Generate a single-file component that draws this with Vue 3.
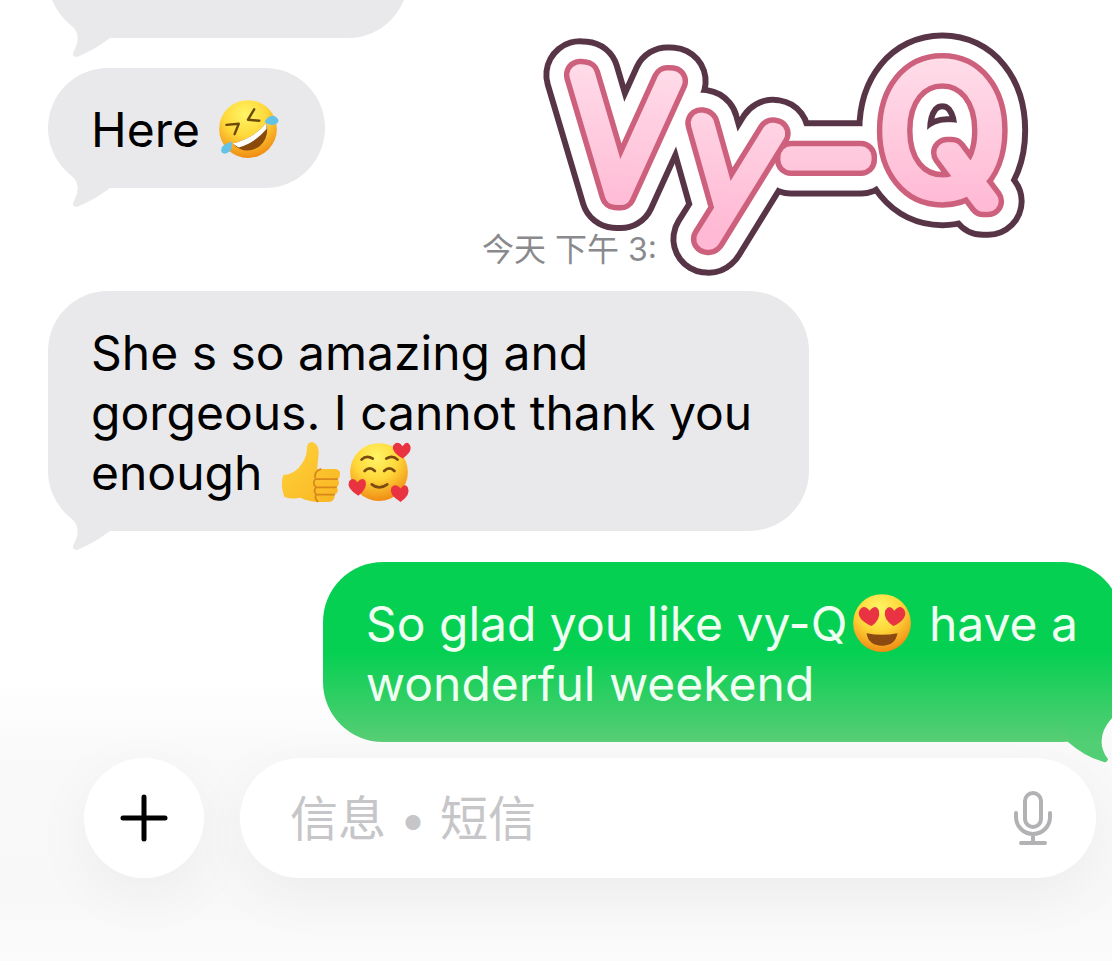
<script setup>
import { ref } from 'vue';
// data
const message = ref('');

// the sticker is painted letter by letter, one pass per outline
const letters = [
  { char: 'V', x: 39, y: 171, size: 164, turn: 4, face: 'narrow' },
  { char: 'y', x: 155, y: 185, size: 170, turn: 8, face: 'light' },
  { char: '–', x: 261, y: 182, size: 140, turn: 0, face: 'dash' },
  { char: 'Q', x: 351, y: 170, size: 164, turn: 0, face: 'round' },
];
const layers = ['edge', 'paper', 'rim', 'candy'];
</script>

<template>
  <div class="chat">
    <main class="thread">
      <div class="bubble received previous">
        <svg class="tail" viewBox="0 0 60 50" aria-hidden="true">
          <path d="M14 8 L26 20 Q33 28 27 41 Q22 48 29 49 Q46 42 62 30 V10Z" />
        </svg>
      </div>

      <div class="bubble received">
        <svg class="tail" viewBox="0 0 60 50" aria-hidden="true">
          <path d="M14 8 L26 20 Q33 28 27 41 Q22 48 29 49 Q46 42 62 30 V10Z" />
        </svg>
        Here
        <svg class="emoji" viewBox="0 0 64 64" role="img" aria-label="rofl">
          <defs>
            <radialGradient id="face" cx="45%" cy="25%" r="75%">
              <stop offset="0" stop-color="#fff566" />
              <stop offset="0.5" stop-color="#ffd83a" />
              <stop offset="1" stop-color="#f08c14" />
            </radialGradient>
          </defs>
          <circle cx="32" cy="32" r="28" fill="url(#face)" />
          <g fill="none" stroke="#6b4a08" stroke-width="2.4" stroke-linejoin="round" stroke-linecap="round">
            <path d="M11 28 L23 27 L19 37" />
            <path d="M38 13 L32 23 L43 24" />
          </g>
          <path d="M17 46 Q38 41 50 26 Q53 40 43 49 Q29 58 17 46Z" fill="#8a4a0c" />
          <path d="M17 46 Q38 41 50 26 L50 32 Q38 46 23 50Z" fill="#fff" />
          <path d="M48 25 Q53 17 59 20 Q65 25 57 28 Q52 29 48 25Z" fill="#63c3e6" />
          <path d="M16 44 Q18 54 10 56 Q4 56 7 49 Q10 46 16 44Z" fill="#63c3e6" />
        </svg>
      </div>

      <time class="stamp">今天 下午 3:</time>

      <div class="bubble received long">
        <svg class="tail" viewBox="0 0 60 50" aria-hidden="true">
          <path d="M14 8 L26 20 Q33 28 27 41 Q22 48 29 49 Q46 42 62 30 V10Z" />
        </svg>
        She s so amazing and<br />
        gorgeous. I cannot thank you<br />
        enough
        <svg class="emoji" viewBox="0 0 64 64" role="img" aria-label="thumbs up">
          <defs>
            <linearGradient id="hand" x1="0" y1="0" x2="1" y2="1">
              <stop offset="0" stop-color="#ffd33c" />
              <stop offset="1" stop-color="#f9b522" />
            </linearGradient>
          </defs>
          <path
            d="M5 35 Q14 34 20 28 Q28 19 28 10 Q28 3 33 3 Q41 5 39 18 L38 29 H56 Q61 30 60 35 Q60 38 58 39 Q61 43 57 47 Q60 51 55 54 Q55 61 49 61 H37 Q27 60 22 57 Q13 59 6 56 Q2 45 5 35Z"
            fill="url(#hand)"
          />
          <path d="M36 38 Q35 31 42 29 M36 39 H58 M37 47 H57 M37 54 H55 M36 39 Q33 43 37 47 Q34 50 37 54 Q35 58 39 61" fill="none" stroke="#d9871a" stroke-width="1.7" />
        </svg>
        <svg class="emoji" viewBox="0 0 64 64" role="img" aria-label="smiling with hearts">
          <circle cx="32" cy="32" r="28" fill="url(#face)" />
          <g fill="none" stroke="#7a4a10" stroke-width="2.6" stroke-linecap="round">
            <path d="M15 20 Q20 15 26 19 M39 19 Q45 15 50 20" />
            <path d="M18 31 Q23 26 28 31 M37 31 Q42 26 47 31" />
            <path d="M25 44 Q32 50 40 44" />
          </g>
          <g fill="#ea3340">
            <path d="M55 19 Q43 12 46 6 Q50 1 55 7 Q59 1 62 6 Q65 12 55 19Z" />
            <path d="M12 55 Q0 48 3 41 Q7 36 11 42 Q16 36 19 41 Q21 48 12 55Z" />
            <path d="M53 61 Q41 54 44 47 Q48 42 53 48 Q57 42 60 47 Q63 54 53 61Z" />
          </g>
        </svg>
      </div>

      <div class="bubble sent">
        <svg class="tail" viewBox="0 0 60 50" aria-hidden="true">
          <defs>
            <linearGradient id="leaf" gradientUnits="userSpaceOnUse" x1="0" y1="0" x2="0" y2="30">
              <stop offset="0" stop-color="#3ccf69" />
              <stop offset="1" stop-color="#52ce74" />
            </linearGradient>
          </defs>
          <path d="M54 2 Q35 20 41 38 Q43 44 46 47 Q45 52 39 49 Q22 44 6 30 V10Z" fill="url(#leaf)" />
        </svg>
        So glad you like vy-Q<svg class="emoji" viewBox="0 0 64 64" role="img" aria-label="heart eyes">
          <circle cx="32" cy="32" r="28" fill="url(#face)" />
          <path d="M22 35 Q7 28 10 20 Q14 13 20 20 Q26 13 29 20 Q31 28 22 35Z" fill="#e93342" />
          <path d="M43 35 Q33 28 35 20 Q39 13 44 20 Q50 13 54 20 Q57 28 43 35Z" fill="#e93342" />
          <path d="M17 42 Q32 45 47 42 Q45 54 32 54 Q19 54 17 42Z" fill="#8a4a12" />
        </svg>
        have a<br />
        wonderful weekend
      </div>
    </main>

    <form class="composer" @submit.prevent>
      <button class="add" type="button" aria-label="+">
        <svg viewBox="0 0 48 48" aria-hidden="true">
          <path d="M24 3 V45 M3 24 H45" />
        </svg>
      </button>
      <div class="field">
        <input v-model="message" type="text" placeholder="信息 • 短信" aria-label="信息 • 短信" />
        <button class="mic" type="button" aria-label="mic">
          <svg viewBox="0 0 40 60" aria-hidden="true">
            <rect x="12" y="5" width="16" height="34" rx="8" />
            <path d="M3 25 V29 A17 17 0 0 0 37 29 V25 M20 46 V55 M8 55 H32" />
          </svg>
        </button>
      </div>
    </form>

    <svg class="sticker" viewBox="0 0 520 280" role="img" aria-label="Vy-Q">
      <defs>
        <linearGradient id="candy" gradientUnits="userSpaceOnUse" x1="0" y1="-135" x2="0" y2="20">
          <stop offset="0" stop-color="#ffdde9" />
          <stop offset="1" stop-color="#ffb9d4" />
        </linearGradient>
      </defs>
      <g v-for="layer in layers" :key="layer" :class="layer" aria-hidden="true">
        <text
          v-for="letter in letters"
          :key="letter.char"
          :class="letter.face"
          :font-size="letter.size"
          :transform="`translate(${letter.x} ${letter.y}) rotate(${letter.turn})`"
        >{{ letter.char }}</text>
      </g>
    </svg>
  </div>
</template>

<style>
body {
  margin: 0;
  background: #fff;
}
</style>

<style scoped>
* {
  box-sizing: border-box;
}
.chat {
  position: relative;
  display: flex;
  flex-direction: column;
  min-height: 100vh;
  overflow: hidden;
  background: linear-gradient(#fff 680px, #f9f9f9 760px, #f8f8f8 900px, #fbfbfb);
  font-family: Inter, 'Noto Sans CJK SC', sans-serif;
}
.thread {
  display: flex;
  flex-direction: column;
  align-items: flex-start;
  padding: 0 0 0 48px;
}
.bubble {
  position: relative;
  padding: 32px 44px 28px 43px;
  border-radius: 60px;
  font-size: 48px;
  line-height: 60px;
}
.received {
  background: #e9e9eb;
  color: #000;
}
.previous {
  width: 360px;
  height: 120px;
  margin-top: -82px;
  margin-bottom: 30px;
}
.long {
  padding-right: 57px;
}
.sent {
  align-self: flex-end;
  margin-top: 31px;
  margin-right: -10px;
  background: linear-gradient(#05d052 50%, #58cd75);
  color: #effff2;
}
.tail {
  position: absolute;
  bottom: -20px;
  left: 0;
  width: 60px;
  height: 50px;
  overflow: visible;
  fill: #e9e9eb;
}
.sent .tail {
  right: 0;
  left: auto;
}
.emoji {
  width: 66px;
  height: 66px;
  margin: -8px 0 -8px 2px;
  vertical-align: -7px;
}
.stamp {
  align-self: flex-start;
  margin: 38px 0 17px 434px;
  color: #8a8a8e;
  font-size: 32px;
  line-height: 48px;
}
.composer {
  display: flex;
  gap: 36px;
  padding: 16px 16px 83px 84px;
}
.add {
  display: flex;
  flex: none;
  align-items: center;
  justify-content: center;
  width: 120px;
  height: 120px;
  padding: 0;
  border: 0;
  border-radius: 60px;
  background: #fff;
  box-shadow: 0 16px 60px rgba(0, 0, 0, 0.05);
}
.add svg {
  width: 48px;
  height: 48px;
  fill: none;
  stroke: #000;
  stroke-width: 5;
  stroke-linecap: round;
}
.field {
  display: flex;
  flex: 1;
  align-items: center;
  min-width: 0;
  height: 120px;
  padding: 0 43px 0 50px;
  border-radius: 60px;
  background: #fff;
  box-shadow: 0 16px 60px rgba(0, 0, 0, 0.05);
}
.field input {
  flex: 1;
  min-width: 0;
  height: 80px;
  padding: 0;
  border: 0;
  outline: 0;
  background: transparent;
  font-family: Inter, 'Noto Sans CJK SC', sans-serif;
  font-size: 48px;
}
.field input::placeholder {
  color: #c6c6c8;
  opacity: 1;
}
.mic {
  padding: 0;
  border: 0;
  background: transparent;
}
.mic svg {
  display: block;
  width: 40px;
  height: 60px;
  fill: none;
  stroke: #b2b2b4;
  stroke-width: 4;
  stroke-linecap: round;
}
.sticker {
  position: absolute;
  top: 20px;
  left: 530px;
  width: 520px;
  height: 280px;
  stroke-linejoin: round;
}
.edge {
  fill: #583447;
  stroke: #583447;
  stroke-width: 73px;
}
.paper {
  fill: #fff;
  stroke: #fff;
  stroke-width: 61px;
}
.rim {
  fill: #cd617d;
  stroke: #cd617d;
  stroke-width: 32px;
}
.candy {
  fill: url(#candy);
  stroke: url(#candy);
  stroke-width: 21px;
}
.narrow {
  font-family: Roboto, sans-serif;
  font-weight: 100;
}
.light {
  font-family: Lato, sans-serif;
  font-weight: 100;
}
.dash,
.round {
  font-family: Inter, sans-serif;
  font-weight: 100;
}
</style>
